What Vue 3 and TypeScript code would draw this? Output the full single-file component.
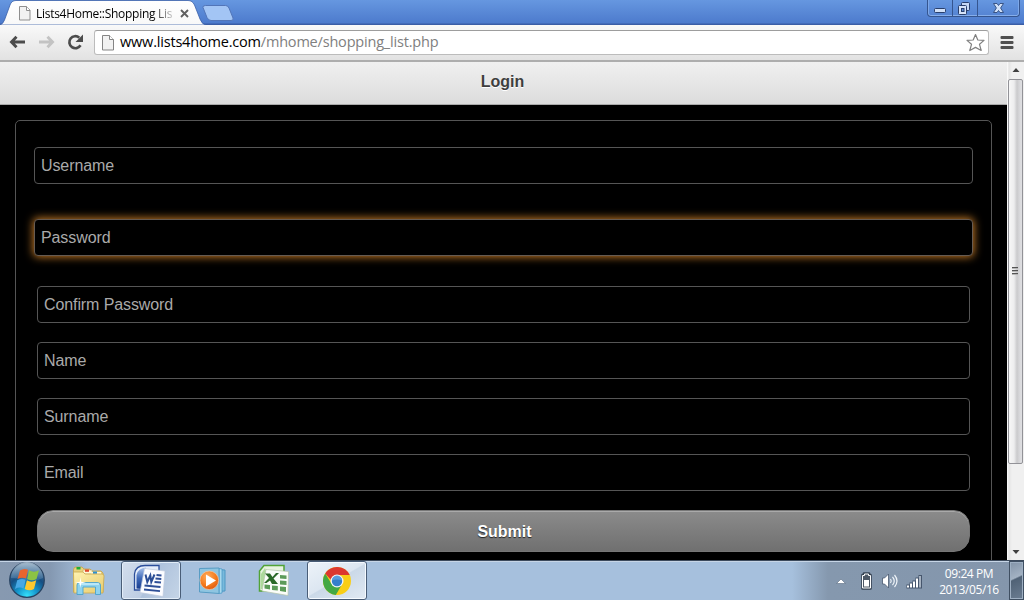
<script setup lang="ts">
interface Field {
  id: string
  label: string
  kind: 'main' | 'sub'
  focused?: boolean
}

const fields: Field[] = [
  { id: 'username', label: 'Username', kind: 'main' },
  { id: 'password', label: 'Password', kind: 'main', focused: true },
  { id: 'confirm', label: 'Confirm Password', kind: 'sub' },
  { id: 'name', label: 'Name', kind: 'sub' },
  { id: 'surname', label: 'Surname', kind: 'sub' },
  { id: 'email', label: 'Email', kind: 'sub' },
]
</script>

<template>
  <div class="screen">
    <header class="titlebar">
      <svg class="tabs" width="240" height="25" viewBox="0 0 240 25">
        <defs>
          <linearGradient id="tabFill" x1="0" y1="0" x2="0" y2="1">
            <stop offset="0" stop-color="#ffffff" />
            <stop offset="1" stop-color="#f8f8f8" />
          </linearGradient>
        </defs>
        <path d="M0 25 Q3 24 4.500 20 L10 5 Q11.500 .5 16 .5 H188 Q192.500 .5 194.500 5 L200 19 Q202 24.500 206 25 Z" fill="url(#tabFill)" stroke="#3a5fa8" stroke-width=".8" />
        <path d="M205.500 5.500 Q202.500 5.500 203 7.500 L207 17.500 Q208.500 20.500 211 20.500 H231 Q234 20.500 233 18 L229 8 Q228 5.500 225.500 5.500 Z" fill="#a3c5f5" stroke="#5275b8" />
      </svg>
      <div class="tab">
        <svg class="page-icon" width="12" height="15" viewBox="0 0 12 15">
          <path d="M.5.5 H7.500 L11 4 V14 H.5 Z" fill="#f2f2f2" stroke="#8f8f8f" />
          <path d="M7.500.5 V4.500 H11" fill="#fff" stroke="#8f8f8f" />
        </svg>
        <span class="tab-title">Lists4Home::Shopping Lis</span>
        <svg class="tab-close" width="9" height="9" viewBox="0 0 9 9"><path d="M1 1 L8 8 M8 1 L1 8" stroke="#606060" stroke-width="1.900" /></svg>
      </div>
      <div class="window-buttons">
        <span class="wb wb-min">
          <svg width="24" height="17" viewBox="1 0 24 17"><rect x="7.500" y="8.500" width="11" height="4" rx="1" fill="#d2e1f8" stroke="#293f6c" /></svg>
        </span>
        <span class="wb wb-max">
          <svg width="24" height="17" viewBox="1 0 24 17">
            <rect x="9.500" y="2.500" width="8" height="8" rx="1" fill="#c6d8f5" stroke="#293f6c" />
            <rect x="6.500" y="5.500" width="8" height="9" rx="1" fill="#d6e3f8" stroke="#293f6c" />
            <rect x="9.500" y="8.500" width="2.500" height="3" fill="#5f8cd6" stroke="#293f6c" />
          </svg>
        </span>
        <span class="wb wb-close">
          <svg width="41" height="17" viewBox="0 0 41 17">
            <path d="M15.500 3.500 H19 L20.500 5.500 L22 3.500 H25.500 L22.600 8 L25.500 12.500 H22 L20.500 10.500 L19 12.500 H15.500 L18.400 8 Z" fill="#d2e1f8" stroke="#2f497a" stroke-width=".9" />
          </svg>
        </span>
      </div>
    </header>

    <div class="toolbar">
      <svg class="nav" width="84" height="34" viewBox="0 0 84 34">
        <path d="M16.500 11.800 L11.500 17 L16.500 22.200 M12 17 H25" fill="none" stroke="#4c4c4c" stroke-width="2.900" />
        <path d="M47.500 11.800 L52.500 17 L47.500 22.200 M52 17 H39" fill="none" stroke="#c3c3c3" stroke-width="2.900" />
        <path d="M80.500 20.300 A6 6 0 1 1 79.300 12.700" fill="none" stroke="#4c4c4c" stroke-width="2.700" />
        <path d="M83 9.500 V17 H75.500 Z" fill="#4c4c4c" />
      </svg>
      <div class="omnibox">
        <svg class="page-icon" width="13" height="16" viewBox="0 0 13 16">
          <path d="M.5 .5 H7.500 L11.500 4.500 V15 H.5 Z" fill="#f2f2f2" stroke="#858585" />
          <path d="M7.500.5 V4.500 H11.500" fill="#fff" stroke="#858585" />
        </svg>
        <span class="url"><b>www.lists4home.com</b>/mhome/shopping_list.php</span>
        <svg class="star" width="20" height="20" viewBox="0 0 20 20">
          <path d="M9.500 1.500 L11.800 7 L18 7.400 L13.500 11.300 L15.200 17.500 L9.500 14.400 L3.800 17.500 L5.500 11.300 L1 7.400 L7.200 7 Z" fill="#fff" stroke="#808080" stroke-width="1.200" stroke-linejoin="round" />
        </svg>
      </div>
      <svg class="menu" width="14" height="14" viewBox="0 0 14 14">
        <rect y="0" x=".5" width="13" height="3" rx="1" fill="#505050" />
        <rect y="5" x=".5" width="13" height="3" rx="1" fill="#505050" />
        <rect y="10" x=".5" width="13" height="3" rx="1" fill="#505050" />
      </svg>
    </div>

    <div class="viewport">
      <main class="page">
        <h1 class="page-header">Login</h1>
        <form class="panel" @submit.prevent>
          <input
            v-for="field in fields"
            :key="field.id"
            class="field"
            :class="[field.kind, { focused: field.focused }]"
            :name="field.id"
            :aria-label="field.label"
            :placeholder="field.label"
            type="text"
          />
          <button class="submit" type="submit">Submit</button>
        </form>
      </main>
      <div class="scrollbar">
        <svg class="arrow" width="17" height="17" viewBox="0 0 17 17"><path d="M5.500 10 L9 6 L12.500 10 Z" fill="#404040" /></svg>
        <div class="thumb"><i></i><i></i><i></i></div>
        <svg class="arrow arrow-down" width="17" height="17" viewBox="0 0 17 17"><path d="M5.500 7 L9 11 L12.500 7 Z" fill="#404040" /></svg>
      </div>
    </div>

    <footer class="taskbar">
      <svg class="orb" width="40" height="40" viewBox="0 0 40 40">
        <defs>
          <radialGradient id="orbFill" cx=".5" cy=".96" r=".95">
            <stop offset="0" stop-color="#35e2fb" />
            <stop offset=".3" stop-color="#1599cf" />
            <stop offset=".62" stop-color="#164f83" />
            <stop offset="1" stop-color="#4f7191" />
          </radialGradient>
          <linearGradient id="orbGloss" x1="0" y1="0" x2="0" y2="1">
            <stop offset="0" stop-color="#c6d8e6" stop-opacity=".75" />
            <stop offset="1" stop-color="#8cb0cd" stop-opacity=".2" />
          </linearGradient>
        </defs>
        <circle cx="20" cy="20" r="17.300" fill="url(#orbFill)" stroke="#274261" stroke-width="1.200" />
        <path d="M4 18 A16 16 0 0 1 36 18 Q29 22 20 20 Q11 18 4 18 Z" fill="url(#orbGloss)" />
        <path d="M13 10.500 Q17 7.700 21 9.800 L19 18.500 Q15 16.600 10.500 19 Z" fill="#e9652d" />
        <path d="M22 10.300 Q27 13 32 10.300 L29.500 19 Q25 21.500 20.200 19 Z" fill="#8cc344" />
        <path d="M10.200 20.200 Q15 17.800 18.700 19.800 L16.500 28.500 Q12.500 26.500 8 29 Z" fill="#48a8e5" />
        <path d="M19.900 20.300 Q24.500 23 29.200 20.200 L27 29 Q22.500 31.500 17.700 29 Z" fill="#ffc82e" />
      </svg>

      <span class="task explorer">
        <svg width="34" height="34" viewBox="0 0 34 34">
          <defs>
            <linearGradient id="folder" x1="0" y1="0" x2="1" y2="1">
              <stop offset="0" stop-color="#fff3b2" />
              <stop offset="1" stop-color="#e8cb6c" />
            </linearGradient>
          </defs>
          <path d="M1.500 27 V5 Q1.500 2 4 2 H10 L12 4 H18 L20 6 H29 L31 8 V27 Z" fill="#ead27d" stroke="#c4a24c" stroke-width=".8" />
          <rect x="4.500" y="2" width="4" height="2.500" fill="#20ad35" />
          <path d="M11 5 H20 V9 H11 Z" fill="#fff7d5" stroke="#c5a75a" stroke-width=".5" />
          <rect x="13" y="4.500" width="4" height="2.300" fill="#df482d" />
          <path d="M19 7 H29 V11 H19 Z" fill="#fff7d5" />
          <rect x="21" y="6.500" width="4" height="2.300" fill="#2a91d6" />
          <path d="M1.500 7 H11 L13 9 H30 Q32 9 32 11 L31 28 H2 Z" fill="url(#folder)" stroke="#c9a950" stroke-width=".8" />
          <path d="M5 29.500 V20 Q5 17.500 8 17.500 H25 Q28.500 17.500 28.500 20 V29.500 H23.500 V22 H11 V29.500 Z" fill="#8fd3ee" stroke="#4ba1cd" stroke-width=".9" />
          <path d="M7 19 H27" stroke="#d3f1fc" stroke-width="1.300" />
          <path d="M8.500 12 L9.200 16.800 L14 17.500 L9.200 18.200 L8.500 23 L7.800 18.200 L3 17.500 L7.800 16.800 Z" fill="#fff" />
        </svg>
      </span>

      <span class="task open word">
        <svg width="34" height="34" viewBox="0 0 34 34">
          <defs>
            <linearGradient id="wordFill" x1="0" y1="0" x2="0" y2="1">
              <stop offset="0" stop-color="#a9c3ec" />
              <stop offset=".5" stop-color="#3f69b8" />
              <stop offset="1" stop-color="#173b8d" />
            </linearGradient>
          </defs>
          <path d="M1.500 26 V10 Q2.500 1.500 12 1.500 H26 V26 Z" fill="#e6eefb" stroke="#2b4e9b" stroke-width="1.300" />
          <path d="M3.500 24.500 V11 Q5 4 13 3.500 L9 25 Z" fill="url(#wordFill)" />
          <path d="M11.500 4.500 L32 7 L30 32.500 L7 28.500 Z" fill="#fbfcff" stroke="#bdc8dc" stroke-width=".7" />
          <path d="M12.500 10.500 L14.300 18 L17.300 11.500 L18.300 18 L21.500 10.500" fill="none" stroke="#2b4e96" stroke-width="2" />
          <path d="M23.500 11 L28.500 11.500 M22.500 14.500 L28.300 15 M21.500 18 L28 18.500 M11.500 21.500 L27.500 23 M11 25.500 L27 27.200" stroke="#2e4f97" stroke-width="1.800" />
        </svg>
      </span>

      <span class="task media">
        <svg width="34" height="34" viewBox="0 0 34 34">
          <defs>
            <radialGradient id="play" cx=".4" cy=".3" r=".75">
              <stop offset="0" stop-color="#ffad5d" />
              <stop offset=".6" stop-color="#f57c1e" />
              <stop offset="1" stop-color="#db560f" />
            </radialGradient>
          </defs>
          <path d="M8 5 L27 6 V27 L8 28 Z" fill="#79b9db" stroke="#4c98c4" />
          <path d="M21 4.500 L24 5 V29 L21 29.500 Z" fill="#a9d9ed" stroke="#4b9bc9" stroke-width=".8" />
          <path d="M1.500 4.500 L21 4 V29.500 L1.500 28 Z" fill="#8ec5e1" stroke="#579cc4" />
          <circle cx="11.300" cy="16.300" r="9.300" fill="url(#play)" stroke="#f5c8a3" stroke-width=".7" />
          <path d="M8 10.500 L18 16.500 L8 22.500 Z" fill="#fff" />
        </svg>
      </span>

      <span class="task excel">
        <svg width="34" height="34" viewBox="0 0 34 34">
          <path d="M1.500 27 V7 L6 1.500 H26 V27 Z" fill="#e7f4df" stroke="#51a336" stroke-width="1.500" />
          <path d="M3 25 V10 L7 4 L9 9 L6 25 Z" fill="#aed99c" />
          <path d="M8 5.500 L30.500 7.500 L30 31.500 L4 27 Z" fill="#fbfdf9" stroke="#b5c5aa" stroke-width=".7" />
          <path d="M22 11 L28.500 11.500 V15 L22 14.500 Z M22 16.500 L28.500 17 V21 L22 20.500 Z M22 22.500 L28 23 V28 L22 27 Z M14 21.500 L19.800 22 V26.500 L14 26 Z M6.500 20.500 L12 21 V25.500 L6.500 24.500 Z" fill="#5c9b58" />
          <path d="M7 9.500 H12 L14.500 13 L18 9 H21 L15.500 14.500 L20 20 H14 L12 16.500 L8.500 19 H6 L11 14 Z" fill="#2b6928" />
        </svg>
      </span>

      <span class="task open chrome">
        <svg width="30" height="30" viewBox="0 0 30 30">
          <circle cx="15" cy="15" r="14" fill="#f9ce17" />
          <path d="M3.200 7.500 A14 14 0 0 0 13.800 29 L20.200 18 L15 15 L9.600 18 Z" fill="#42a844" />
          <path d="M3.200 7.500 A14 14 0 0 1 27.700 9 H15 Q10.500 9 9 14 Z" fill="#dc382f" />
          <circle cx="15" cy="15" r="6.500" fill="#f3f5f7" />
          <circle cx="15" cy="15" r="5.200" fill="#347fcb" />
          <path d="M10 14.500 A5 5 0 0 1 20 14.500 Q15 12.500 10 14.500 Z" fill="#6ba8e2" opacity=".7" />
        </svg>
      </span>

      <svg class="tray" width="90" height="20" viewBox="0 0 90 20">
        <path d="M.5 12.500 L5 8 L9.500 12.500 Z" fill="#fff" stroke="#596b82" stroke-width=".6" />
        <path d="M28 2.500 H33 V4 H34.500 V17.500 H26.500 V4 H28 Z" fill="#4d5865" stroke="#354252" stroke-width="2.600" stroke-linejoin="round" />
        <path d="M28.500 3 H32.500 V4.500 H34.500 V17 H26.500 V4.500 H28.500 Z" fill="#4d5865" stroke="#fff" stroke-width="1" />
        <rect x="28" y="9" width="5" height="6.500" fill="#fff" />
        <path d="M46.500 7 H48.500 L52.500 3 V17 L48.500 13 H46.500 Z" fill="#fff" stroke="#47586f" stroke-width=".8" />
        <path d="M54.500 8 Q56 10 54.500 12 M56.500 5.800 Q60 10 56.500 14.200 M58.500 4 Q63.500 10 58.500 16" stroke="#eff4f9" stroke-width="1.200" fill="none" />
        <path d="M70.500 17.500 V13.500 H73.500 V11.500 H76.500 V9.500 H79.500 V6.500 H82.500 V4 H86 V17.500 Z" fill="#46566d" />
        <path d="M71 14.500 H73 V16.500 H71 Z M74 12.500 H76 V16.500 H74 Z M77 10.500 H79 V16.500 H77 Z M80 7.500 H82 V16.500 H80 Z" fill="#fff" />
        <path d="M83 5 H85 V16.500 H83 Z" fill="#a7b2c0" />
      </svg>
      <div class="clock"><span class="time">09:24 PM</span><span class="date">2013/05/16</span></div>
      <span class="show-desktop"></span>
    </footer>
  </div>
</template>

<style>
body {
  margin: 0;
  overflow: hidden;
}
</style>

<style scoped>
* {
  box-sizing: border-box;
}
.screen {
  width: 1024px;
  height: 600px;
  display: flex;
  flex-direction: column;
  overflow: hidden;
  background: #000;
  font-family: "Open Sans", "Noto Sans", sans-serif;
}
svg {
  display: block;
  flex: none;
}
.titlebar {
  position: relative;
  height: 25px;
  flex: none;
  display: flex;
  justify-content: space-between;
  background: linear-gradient(#6697e0, #4d7bcd 23px, #3a5da6 24px);
}
.tabs {
  position: absolute;
  left: 0;
  top: 0;
}
.tab {
  position: relative;
  width: 196px;
  display: flex;
  align-items: center;
  padding: 1px 0 0 19px;
}
.tab-title {
  width: 138px;
  margin-left: 5px;
  font-size: 12px;
  letter-spacing: -0.28px;
  white-space: nowrap;
  overflow: hidden;
  color: transparent;
  background: linear-gradient(90deg, #000 116px, #ccc 137px);
  background-clip: text;
}
.tab-close {
  margin-left: 6px;
}
.window-buttons {
  display: flex;
  height: 17px;
  margin-right: 4px;
  border: 1px solid #35558f;
  border-top: 0;
  border-radius: 0 0 4px 4px;
  box-shadow: inset 0 -1px #86aeea, inset 1px 0 #7ea8e8, inset -1px 0 #7ea8e8;
}
.wb {
  height: 16px;
  overflow: hidden;
}
.wb-min,
.wb-max {
  width: 25px;
  border-right: 1px solid #35558f;
}
.wb-close {
  width: 41px;
}
.toolbar {
  height: 37px;
  flex: none;
  display: flex;
  background: linear-gradient(#f9f9f9, #e2e2e2);
  border-bottom: 2px solid #adadad;
}
.omnibox {
  width: 895px;
  height: 25px;
  margin: 5px 0 0 10px;
  display: flex;
  align-items: center;
  padding: 0 2px 0 7px;
  background: #fff;
  border: 1px solid #bcbcbc;
  border-top-color: #9d9d9d;
  border-radius: 3px;
}
.url {
  flex: 1;
  margin-left: 5px;
  padding-bottom: 2px;
  font-size: 14.5px;
  line-height: 21px;
  letter-spacing: -0.19px;
  color: #808080;
  white-space: nowrap;
}
.url b {
  font-weight: 400;
  color: #000;
}
.menu {
  margin: 11px 0 0 11px;
}
.viewport {
  height: 498px;
  flex: none;
  display: flex;
}
.page {
  width: 1007px;
  height: 498px;
  overflow: hidden;
  font-family: "Liberation Sans", Arial, sans-serif;
}
.page-header {
  height: 43px;
  margin: 0;
  padding-right: 2px;
  font-size: 16px;
  line-height: 39px;
  font-weight: 700;
  text-align: center;
  color: #3e3e3e;
  text-shadow: 0 1px #fff;
  background: linear-gradient(#f0f0f0, #dcdcdc);
  border-bottom: 1px solid #aaa;
}
.panel {
  width: 977px;
  height: 480px;
  margin: 15px 0 0 15px;
  padding: 26px 18px 0;
  display: flex;
  flex-direction: column;
  border: 1px solid #555;
  border-radius: 5px;
}
.field {
  display: block;
  flex: none;
  height: 37px;
  padding: 0 6px;
  font: 16px/35px "Liberation Sans", Arial, sans-serif;
  letter-spacing: -0.1px;
  color: #aaa;
  background: #000;
  border: 1px solid #555;
  border-radius: 4px;
  outline: 0;
}
.field::placeholder {
  color: #aaa;
  opacity: 1;
}
.field.main {
  margin-bottom: 35px;
}
.field.main.focused {
  margin-bottom: 30px;
  border-color: #665b52;
  box-shadow: 0 0 9px 1px #c47a26;
}
.field.sub {
  margin: 0 3px 19px;
}
.submit {
  height: 42px;
  margin: 0 3px;
  flex: none;
  padding: 2px 0 0 2px;
  font: bold 16px "Liberation Sans", Arial, sans-serif;
  color: #fff;
  text-shadow: 0 1px 1px #222;
  background: linear-gradient(#8b8b8b, #707070);
  border: 1px solid #777;
  border-radius: 16px;
  box-shadow: inset 0 1px #aaa;
}
.scrollbar {
  width: 17px;
  display: flex;
  flex-direction: column;
  background: linear-gradient(90deg, #fff, #e4e4e4 2px, #f0f0f0 5px, #f0f0f0);
}
.thumb {
  width: 15px;
  height: 385px;
  margin-left: 1px;
  padding: 0 1px 2px 0;
  display: flex;
  flex-direction: column;
  align-items: center;
  justify-content: center;
  gap: 1px;
  border: 1px solid #929297;
  border-radius: 2px;
  background: linear-gradient(90deg, #f7f7f7, #ededee 5px, #cacacc 8px, #dedee1 12px);
}
.thumb i {
  width: 6px;
  height: 2px;
  background: linear-gradient(#555 50%, #b5b5b5 50%);
}
.arrow-down {
  margin-top: auto;
}
.taskbar {
  height: 40px;
  flex: none;
  display: flex;
  align-items: flex-start;
  border-top: 1px solid #3c4a5c;
  box-shadow: inset 0 1px #c6d5e6;
  background: linear-gradient(90deg, #8799b0 0, #8498b1 50px, #a6c0dd 88px, #a6c0dd 792px, #8598ae 828px, #8496ac);
}
.orb {
  margin: -1px 0 0 7px;
}
.task {
  height: 39px;
  display: flex;
  justify-content: center;
  align-items: center;
  flex: none;
}
.explorer {
  width: 34px;
  margin-left: 25px;
  padding-top: 3px;
}
.open {
  border: 1px solid #495d77;
  border-radius: 3px;
  background: linear-gradient(120deg, #d3deed, #bdcde2 48%, #aec2dc 50%, #c5d5e7);
  box-shadow: inset 0 0 0 1px #e2edf8;
}
.word {
  width: 60px;
  margin-left: 15px;
  padding-right: 2px;
}
.media {
  width: 34px;
  margin-left: 17px;
}
.excel {
  width: 34px;
  margin-left: 26px;
}
.chrome {
  width: 60px;
  margin-left: 15px;
  background: linear-gradient(150deg, #edf3f9, #dce6f1 48%, #cbd9e8 50%, #e0e9f3);
  box-shadow: inset 0 0 0 1px #f5faff;
}
.tray {
  margin: 10px 0 0 469px;
}
.clock {
  width: 76px;
  margin-left: 5px;
  padding-top: 4px;
  display: flex;
  flex-direction: column;
  align-items: center;
  font-size: 12px;
  line-height: 17px;
  letter-spacing: -0.4px;
  color: #fff;
}
.date {
  position: relative;
  top: -1px;
}
.show-desktop {
  width: 15px;
  height: 39px;
  margin-left: 2px;
  border: 1px solid #3f4f62;
  background: linear-gradient(155deg, #8293a7 0, #a3b2c3 42%, #506276 46%, #6b7d92);
  box-shadow: inset 0 0 0 1px #9eafc2;
}
</style>
